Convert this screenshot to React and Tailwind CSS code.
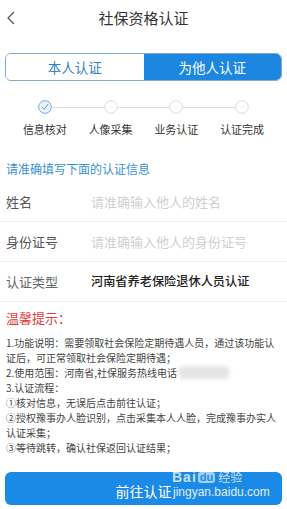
import React from "react";

function StepCircle({ done }) {
  if (done) {
    return (
      <svg width="14" height="14" viewBox="0 0 14 14" className="block">
        <circle cx="7" cy="7" r="6.3" fill="#eef5fc" stroke="#6fa6dc" strokeWidth="1" />
        <path d="M4.3 7.3 L6.3 9.4 L9.9 4.4" fill="none" stroke="#5d9cd9" strokeWidth="1" strokeLinecap="round" strokeLinejoin="round" />
      </svg>
    );
  }
  return (
    <svg width="14" height="14" viewBox="0 0 14 14" className="block">
      <circle cx="7" cy="7" r="6.3" fill="#fff" stroke="#dadada" strokeWidth="1" />
      <circle cx="5" cy="7" r="0.5" fill="#dcdcdc" />
      <circle cx="7" cy="7" r="0.5" fill="#dcdcdc" />
      <circle cx="9" cy="7" r="0.5" fill="#dcdcdc" />
    </svg>
  );
}

const steps = ["信息核对", "人像采集", "业务认证", "认证完成"];

const notes = [
  "1.功能说明：需要领取社会保险定期待遇人员，通过该功能认",
  "证后，可正常领取社会保险定期待遇；",
  null,
  "3.认证流程：",
  "①核对信息，无误后点击前往认证；",
  "②授权豫事办人脸识别，点击采集本人人脸，完成豫事办实人",
  "认证采集；",
  "③等待跳转，确认社保返回认证结果；",
];

export default function App() {
  return (
    <div className="w-[287px] h-[509px] overflow-hidden bg-white font-['Noto_Sans_CJK_SC','Noto_Sans',sans-serif]">
      {/* header */}
      <div className="grid grid-cols-[40px_1fr_40px] items-center h-[36px]">
        <div className="pl-[6px] flex items-center">
          <svg width="10" height="14" viewBox="0 0 10 14">
            <path d="M7.5 1.5 L2 7 L7.5 12.5" fill="none" stroke="#555" strokeWidth="1.3" strokeLinecap="round" strokeLinejoin="round" />
          </svg>
        </div>
        <div className="text-center text-[15px] leading-[20px] text-[#333]">社保资格认证</div>
        <div />
      </div>

      {/* tabs */}
      <div className="mt-[17px] mx-[5px] h-[28px] flex rounded-[6px] border border-[#7eaad3] overflow-hidden">
        <div className="flex-1 flex items-center justify-center text-[13.5px] text-[#3580c4] bg-white">本人认证</div>
        <div className="flex-1 flex items-center justify-center text-[13.5px] text-white bg-[#1c86e0]">为他人认证</div>
      </div>

      {/* steps */}
      <div className="mt-[19px] grid grid-cols-4 px-[12px]">
        {steps.map((s, i) => (
          <div key={s} className="relative flex flex-col items-center">
            {i < 3 && (
              <div className="absolute top-[6.5px] left-[calc(50%+7px)] w-[calc(100%-14px)] h-px bg-[#dcdcdc]" />
            )}
            <StepCircle done={i === 0} />
            <div className="mt-[8px] text-[11px] leading-[14px] text-[#333]">{s}</div>
          </div>
        ))}
      </div>

      {/* hint */}
      <div className="mt-[24px] px-[6px] text-[12px] leading-[18px] text-[#3a8fd1]">请准确填写下面的认证信息</div>

      {/* form rows */}
      <div className="mt-[4px]">
        <div className="flex items-center h-[40px] pl-[6px] border-b border-[#f0f0f0]">
          <div className="w-[85px] text-[13px] text-[#555]">姓名</div>
          <div className="text-[13px] text-[#cfcfcf]">请准确输入他人的姓名</div>
        </div>
        <div className="flex items-center h-[40px] pl-[6px] border-b border-[#f0f0f0]">
          <div className="w-[85px] text-[13px] text-[#555]">身份证号</div>
          <div className="text-[13px] text-[#cfcfcf]">请准确输入他人的身份证号</div>
        </div>
        <div className="flex items-center h-[40px] pl-[6px] border-b border-[#f0f0f0]">
          <div className="w-[85px] text-[13px] text-[#666]">认证类型</div>
          <div className="flex-1 text-[12.2px] font-medium text-[#222]">河南省养老保险退休人员认证</div>
        </div>
      </div>

      {/* notice */}
      <div className="mt-[7px] px-[6px] text-[13px] leading-[18px] text-[#e23b3b]">温馨提示：</div>
      <div className="mt-[8px] px-[6px] text-[10px] leading-[15px] text-[#444] whitespace-nowrap">
        {notes.map((n, i) =>
          n === null ? (
            <div key={i} className="flex items-center">
              <span>2.使用范围：河南省,社保服务热线电话</span>
              <span className="inline-block ml-[2px] w-[50px] h-[13px] rounded-[3px] bg-[#e4e4e4] blur-[2px]" />
            </div>
          ) : (
            <div key={i}>{n}</div>
          )
        )}
      </div>

      {/* button */}
      <div className="relative mt-[17px] mx-[5px] h-[33px] rounded-[6px] bg-[#1b8ae6] flex items-center justify-center">
        <span className="text-[14px] leading-[18px] text-white mt-[5px]">前往认证</span>
        <div className="absolute left-[167px] top-[-1px] h-[12px] flex items-center text-white/75 font-['Liberation_Sans',sans-serif]">
          <span className="text-[14px] font-bold leading-[12px] tracking-[1px]">Bai</span>
          <span className="ml-[1px] px-[2px] rounded-[3px] bg-white/60 text-[#1b8ae6] text-[11px] font-bold leading-[11px]">du</span>
          <span className="ml-[3px] text-[12px] leading-[12px] font-['Noto_Sans_CJK_SC',sans-serif]">经验</span>
        </div>
        <div className="absolute left-[168px] top-[13px] text-[12px] leading-[14px] text-white/85 font-['Liberation_Sans',sans-serif]">jingyan.baidu.com</div>
      </div>
    </div>
  );
}
